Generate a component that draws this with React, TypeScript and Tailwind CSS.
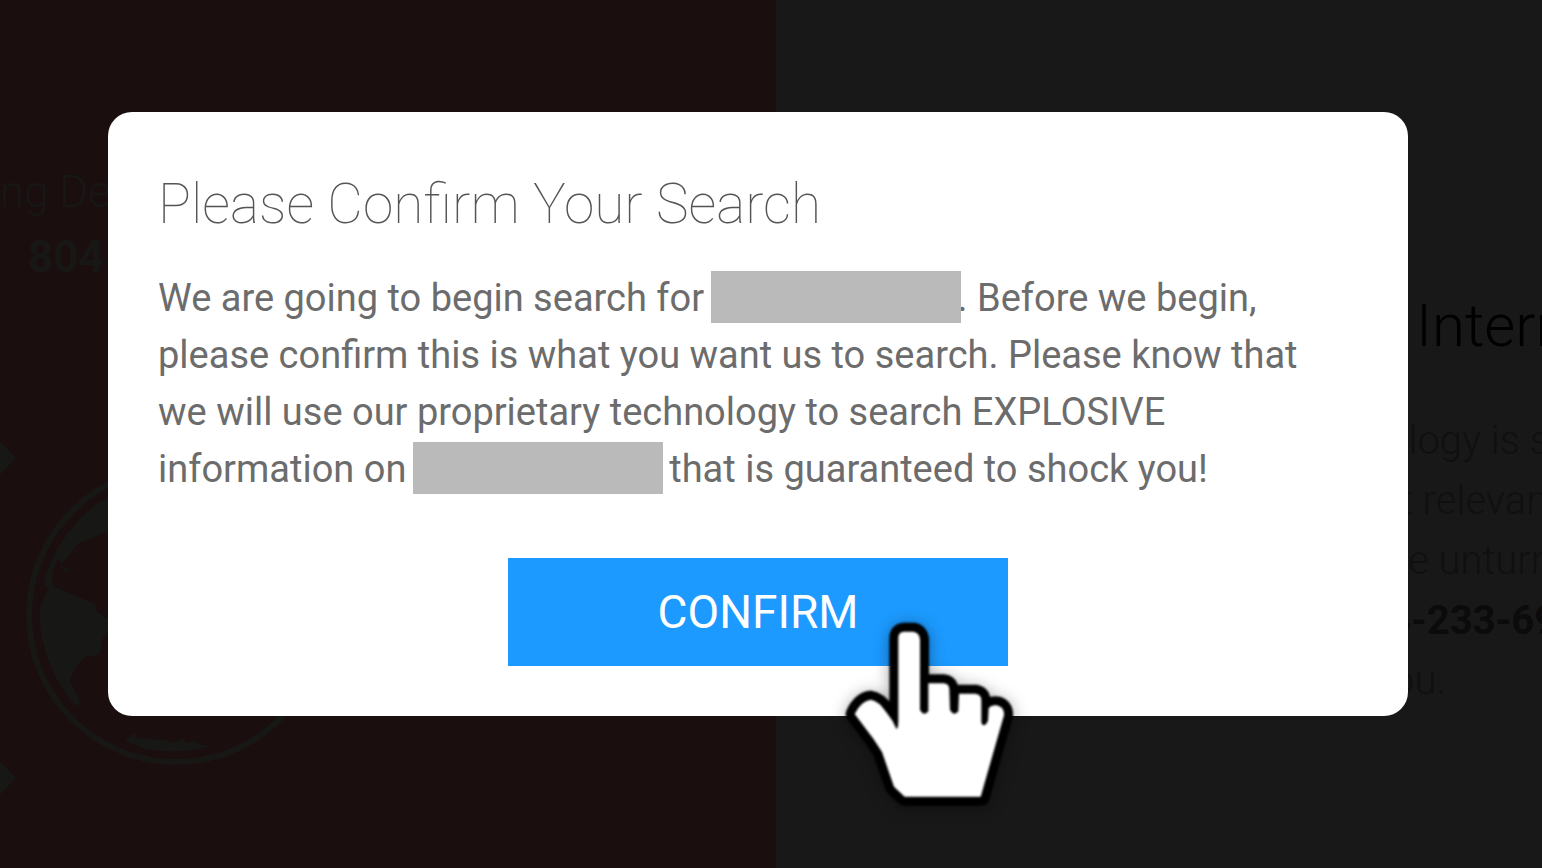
import type { ReactNode } from 'react';

// sits over the ends of the words around it
function Redacted() {
  return <span className="relative -mx-[3px] inline-block h-[52px] w-[250px] bg-[#bababa] align-[-12px]" />;
}

function Arrow() {
  return (
    <svg width="16" height="34" viewBox="0 0 16 34" fill="#171716" aria-hidden="true">
      <path d="M0 0L16 17L0 34Z" />
    </svg>
  );
}

function Globe() {
  return (
    <svg width="300" height="300" viewBox="0 0 300 300" fill="#171716" aria-hidden="true">
      <circle cx="150" cy="150" r="147" fill="none" stroke="#171716" strokeWidth="6" />
      <path d="M90 28C68 38 48 57 34 80C24 96 19 109 18 119L24 125L27 121C25 110 27 104 32 95L36 98L41 93C46 87 50 80 54 78C62 74 75 69 84 66Z" />
      <path d="M34 100L41 103L42 107L37 105Z" />
      <path d="M24 121L31 123L69 139L71 147L84 155L83 166L77 173L74 187L68 192L60 191C53 198 47 205 44 216L54 237C53 240 51 241 49 240C36 225 24 205 18 181C13 163 13 151 15 139Z" />
      <path d="M99 276L104 272L108 267L112 274L121 273L129 275L139 275L147 278L156 274L161 278L168 276L175 280L185 281C165 287 140 288 120 284Z" />
    </svg>
  );
}

function HandCursor() {
  const hand =
    'M235 112Q236 96 252 95L280 95Q299 98 300 120L300 330Q312 350 325 334L325 250L372 250Q388 252 388 268L390 330Q402 350 415 334L417 281L466 281Q484 284 484 300L484 368Q492 386 504 362L506 324Q514 314 530 316Q554 322 552 346L482 590L254 590L222 560L186 456L160 416L104 342Q122 304 152 299Q176 302 200 338Q220 362 229 386Q235 388 235 360Z';
  return (
    <svg
      className="pointer-events-none absolute top-[42px] left-[312px] blur-[1px] drop-shadow-[0_2px_8px_rgba(0,0,0,0.35)]"
      width="220"
      height="220"
      viewBox="0 0 660 660"
      aria-hidden="true"
    >
      <path d={hand} fill="#000" stroke="#000" strokeWidth="54" strokeLinejoin="round" />
      <path d={hand} fill="#fff" />
    </svg>
  );
}

function Modal({ children }: { children: ReactNode }) {
  return (
    <div className="absolute inset-0 pt-28 pr-[134px] pl-[108px]">
      <div role="dialog" aria-labelledby="title" className="rounded-3xl bg-white p-[50px]">
        {children}
      </div>
    </div>
  );
}

export default function App() {
  return (
    <div className="relative min-h-screen overflow-hidden font-[Roboto,sans-serif]">
      {/* Dimmed page */}
      <div className="grid min-h-screen grid-cols-[776fr_766fr]">
        <section className="bg-[#1b0e0f] pt-40 text-[44px] whitespace-nowrap text-[#171716]">
          <p className="leading-[64px] font-light">ng De</p>
          <p className="pl-7 leading-[66px] font-bold">804</p>
          <div className="flex gap-[10px] pt-[151px]">
            <div className="flex flex-col gap-[286px]">
              <Arrow />
              <Arrow />
            </div>
            <div className="pt-6">
              <Globe />
            </div>
          </div>
        </section>
        <section className="flex justify-end bg-[#181818] pt-[292px]">
          <div className="w-[182px] overflow-hidden text-[40px] leading-[60px] font-light whitespace-nowrap text-[#101010]">
            <h2 className="pl-14 text-[60px] leading-[68px] text-black">Intern</h2>
            <p className="pt-[51px] pl-[26px]">ology is s</p>
            <p className="pl-10">t relevan</p>
            <p className="pl-12">e unturn</p>
            <p className="pl-7 font-bold text-[#0b0b0b]">4-233-69</p>
            <p className="pl-8">ou.</p>
          </div>
        </section>
      </div>

      {/* Confirm dialog */}
      <Modal>
        <h1 id="title" className="text-[55px] leading-[84px] font-thin text-[#555]">
          Please Confirm Your Search
        </h1>
        <p className="mt-6 text-[38px] leading-[57px] text-[#6c6c6c]">
          We are going to begin search for <Redacted />. Before we begin,
          <br />
          please confirm this is what you want us to search. Please know that
          <br />
          we will use our proprietary technology to search EXPLOSIVE
          <br />
          information on <Redacted /> that is guaranteed to shock you!
        </p>
        <div className="relative mx-auto mt-[60px] w-[500px]">
          <button type="button" className="h-[108px] w-full cursor-pointer bg-[#1c9aff] text-[46px] text-white">
            CONFIRM
          </button>
          <HandCursor />
        </div>
      </Modal>
    </div>
  );
}
